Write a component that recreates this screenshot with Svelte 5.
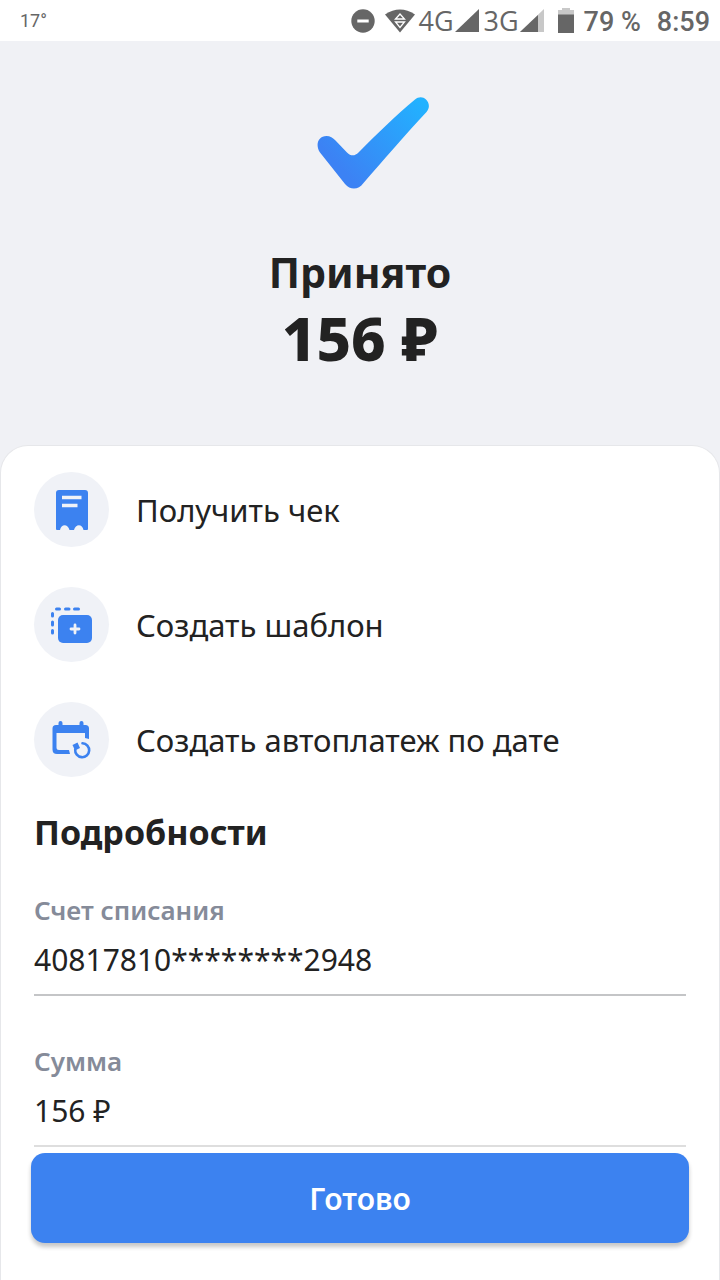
<script lang="ts">
	type Action = { icon: string; label: string };
	type Field = { label: string; value: string };

	const actions: Action[] = [
		{ icon: 'receipt', label: 'Получить чек' },
		{ icon: 'template', label: 'Создать шаблон' },
		{ icon: 'calendar', label: 'Создать автоплатеж по дате' },
	];

	const fields: Field[] = [
		{ label: 'Счет списания', value: '40817810********2948' },
		{ label: 'Сумма', value: '156 ₽' },
	];
</script>

<div class="page">
	<div class="status">
		<span class="temp">17°</span>
		<div class="indicators">
			<svg class="dnd" width="24" height="24" viewBox="0 0 24 24">
				<circle cx="12" cy="12" r="11.7" fill="#666" />
				<path d="M6.3 12h11.4" stroke="#fff" stroke-width="3" />
			</svg>
			<svg class="wifi" width="30" height="24" viewBox="0 0 30 24">
				<path d="M0 5.500Q15 -4.500 30 5.500L15 23.500Z" fill="#666" />
				<path d="M10.500 10 15 5l4.500 5ZM10.500 13h9L15 18.500Z" fill="none" stroke="#fff" stroke-width="1.300" />
			</svg>
			<span class="net">4G</span>
			<svg width="24" height="24" viewBox="0 0 24 24">
				<path d="M0 23 24 0v23Z" fill="#666" />
			</svg>
			<span class="net second">3G</span>
			<svg width="24" height="24" viewBox="0 0 24 24">
				<path d="M0 23 24 0v23Z" fill="#c8c8c8" />
				<path d="M0 23 18 6v17Z" fill="#666" />
			</svg>
			<svg class="battery" width="16" height="25" viewBox="0 0 16 25">
				<path d="M4 0h8v2h4v5H0V2h4Z" fill="#c8c8c8" />
				<path d="M0 6.500h16V25H0Z" fill="#666" />
			</svg>
			<span class="level">79 %</span>
			<span class="time">8:59</span>
		</div>
	</div>

	<header class="result">
		<svg class="check" width="112" height="92" viewBox="0 0 112 92">
			<defs>
				<linearGradient id="check-fill" gradientUnits="userSpaceOnUse" x1="26" y1="74" x2="104" y2="4">
					<stop offset="0" stop-color="#3c82f4" />
					<stop offset="1" stop-color="#22b2ff" />
				</linearGradient>
			</defs>
			<path
				fill="url(#check-fill)"
				d="M3 55.500C-2 48 1 39 9.500 39C13 39 16 41 18.500 43.500L30 55.500C34 59.500 38 59 41.500 55.500C60 37 79 18 98 2.500C101.500 -.5 106 -.5 109 2.500C112.500 6 113 11 109.500 15C88 38 65 65 46.500 86C41.500 93 33.500 93.500 28 87Z"
			/>
		</svg>
		<h1>Принято</h1>
		<p class="amount">156 ₽</p>
	</header>

	<main class="card">
		<ul class="actions">
			{#each actions as action}
				<li>
					<button class="action" type="button">
						<span class="circle">
							{#if action.icon === 'receipt'}
								<svg width="75" height="75" viewBox="0 0 75 75">
									<path
										fill="#3c82f0"
										d="M25 18h26q3 0 3 3v36q0 1-1 1h-3.500c-1-6.500-8-6.500-9.500 0h-4.500c-1.500-6.500-8.500-6.500-9.500 0H23q-1 0-1-1V21q0-3 3-3Z"
									/>
									<path d="M28 25.500h19.500M28 33.500h15.500" stroke="#f0f2f7" stroke-width="3.600" />
								</svg>
							{:else if action.icon === 'template'}
								<svg width="75" height="75" viewBox="0 0 75 75">
									<path
										d="M22.500 22h3M31.500 22h3.500M40.500 22h4M18.500 26.500v2.500M18.500 35v3M18.500 43.500v2.500"
										stroke="#3c82f0"
										stroke-width="3"
										stroke-linecap="round"
									/>
									<rect x="24" y="28" width="34" height="28" rx="5" fill="#3c82f0" />
									<path d="M37 42h8M41 38v8" stroke="#f0f2f7" stroke-width="2.800" stroke-linecap="round" />
								</svg>
							{:else}
								<svg width="75" height="75" viewBox="0 0 75 75">
									<path
										fill="#3c82f0"
										d="M22 23h2.500v-2a2 2 0 0 1 4 0v2h17v-2a2 2 0 0 1 4 0v2h2q3.500 0 3.500 3.500v10.500l-4-1V31H22.500v14.500q0 2.500 2.500 2.500h10l1 4H23q-4.500 0-4.500-4.500V26.500q0-3.500 3.500-3.500Z"
									/>
									<path
										d="M48.500 41.200A7 7 0 1 1 41.200 47.500"
										fill="none"
										stroke="#3c82f0"
										stroke-width="2.600"
										stroke-linecap="round"
									/>
									<path fill="#3c82f0" d="m38.500 43 5-2.500 2.500 5.500-5 2.500Z" />
								</svg>
							{/if}
						</span>
						<span>{action.label}</span>
					</button>
				</li>
			{/each}
		</ul>

		<h2>Подробности</h2>
		<dl>
			{#each fields as field}
				<div class="field">
					<dt>{field.label}</dt>
					<dd>{field.value}</dd>
				</div>
			{/each}
		</dl>

		<div class="footer">
			<button class="done" type="button">Готово</button>
		</div>
	</main>
</div>

<style>
	:global(body) {
		margin: 0;
		background: #f0f1f5;
	}

	.page {
		display: flex;
		flex-direction: column;
		min-height: 100vh;
		font-family: 'Noto Sans', 'Open Sans', sans-serif;
		color: #222;
	}

	.status {
		display: flex;
		align-items: center;
		justify-content: space-between;
		height: 41px;
		padding: 0 10px 0 20px;
		background: #fff;
		color: #666;
		font-family: Roboto, sans-serif;
		font-weight: 500;
	}

	.temp {
		font-size: 18px;
		font-weight: 400;
	}

	.indicators {
		display: flex;
		align-items: center;
	}

	.indicators svg {
		display: block;
	}

	.dnd {
		margin-right: 10px;
	}

	.wifi {
		margin-right: 4px;
	}

	.net {
		width: 36px;
		font-family: 'Open Sans', 'Noto Sans', sans-serif;
		font-size: 27px;
		font-weight: 400;
	}

	.second {
		margin-left: 5px;
	}

	.battery {
		margin: 0 10px 0 14px;
	}

	.level,
	.time {
		font-size: 27px;
		line-height: 32px;
		padding-top: 2px;
	}

	.time {
		margin-left: 16px;
	}

	.result {
		display: flex;
		flex-direction: column;
		align-items: center;
		padding: 56px 34px 68px;
	}

	.check {
		margin: 0 0 56px 26px;
	}

	h1 {
		margin: 0;
		font-size: 41px;
		line-height: 54px;
		font-weight: 700;
	}

	.amount {
		margin: 0;
		font-size: 60px;
		line-height: 78px;
		font-weight: 800;
	}

	.card {
		flex: 1;
		box-sizing: border-box;
		padding: 26px 33px 0;
		border: 1px solid #e6e7ea;
		border-bottom: 0;
		border-radius: 28px 28px 0 0;
		background: #fff;
	}

	.actions {
		display: flex;
		flex-direction: column;
		gap: 40px;
		margin: 0;
		padding: 0;
		list-style: none;
	}

	.action {
		display: flex;
		align-items: center;
		gap: 27px;
		width: 100%;
		padding: 0;
		border: 0;
		background: none;
		color: inherit;
		font: inherit;
		font-size: 31px;
		line-height: 44px;
		text-align: left;
		cursor: pointer;
	}

	.circle {
		width: 75px;
		height: 75px;
		border-radius: 50%;
		background: #f0f2f7;
	}

	.circle svg {
		display: block;
	}

	h2 {
		margin: 31px 0 36px;
		font-size: 34px;
		line-height: 48px;
		font-weight: 700;
	}

	dl {
		display: flex;
		flex-direction: column;
		gap: 47px;
		margin: 0;
	}

	.field {
		padding-bottom: 12px;
		border-bottom: 2px solid #c4c5c7;
	}

	.field:last-child {
		border-color: #dedede;
	}

	dt {
		color: #858b99;
		font-size: 26px;
		line-height: 36px;
		font-weight: 600;
	}

	dd {
		margin: 10px 0 0;
		font-size: 30px;
		line-height: 44px;
	}

	.footer {
		margin: 0 -3px;
		padding: 6px 0 37px;
	}

	.done {
		display: block;
		width: 100%;
		height: 90px;
		border: 0;
		border-radius: 14px;
		background: #3c82f0;
		box-shadow: 0 4px 4px rgba(0, 0, 0, 0.22);
		color: #fff;
		font: inherit;
		font-size: 30px;
		font-weight: 600;
		cursor: pointer;
	}
</style>
